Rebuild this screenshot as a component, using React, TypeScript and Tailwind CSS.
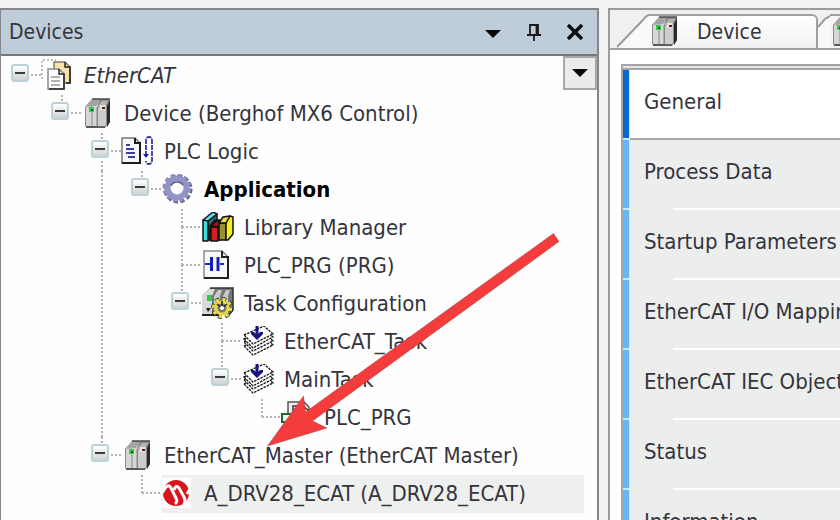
import type { ReactNode } from 'react'
import { useState } from 'react'
import clsx from 'clsx'

type TreeNode = {
    label: string
    icon: ReactNode
    labelClass?: string
    selected?: boolean
    children?: TreeNode[]
}

function DeviceIcon() {
    return (
        <svg viewBox="0 0 32 32" className="h-8 w-8 shrink-0" aria-hidden="true">
            <path d="M10 1H28V24L23 30H5L3 28V9Z" fill="#8a8a8a" />
            <path d="M4 9 10 2H17L15 9V28H4Z" fill="#d6d6d6" />
            <path d="M4 9 10 2H18L14 8Z" fill="#a4a4a4" />
            <path d="M16 10 19 7H24V27L22 29H16Z" fill="#cdcdcd" />
            <path d="M15 9 20 3H26L23 8Z" fill="#b5b5b5" />
            <path d="M25 8 28 2V24L25 29Z" fill="#2a2a2a" />
            <path d="M15 9V29M10 14V28" stroke="#888" />
            <path d="M10 1H28M4 29H23" stroke="#4a4a4a" strokeWidth="1.5" />
            <rect x="7" y="9" width="5" height="5" fill="#39c94a" />
            <rect x="9" y="11" width="2" height="2" fill="#11641d" />
            <path d="M18 7H23V12H18Z" fill="#f4e2da" />
            <rect x="20" y="9" width="3" height="2" fill="#4b2018" />
        </svg>
    )
}

function ProjectIcon() {
    return (
        <svg viewBox="0 0 32 32" className="h-8 w-8 shrink-0 overflow-visible" aria-hidden="true">
            <path d="M0 19V0H14" fill="none" stroke="#a8a8a8" strokeWidth="1.5" strokeDasharray="2 2" />
            <path d="M12 2H23L28 7V23H12Z" fill="#f6e3a9" stroke="#857b5e" strokeWidth="1.5" />
            <path d="M23 2V7H28V23H24" fill="none" stroke="#222" strokeWidth="1.5" />
            <path d="M6 9H17L22 14V29H6Z" fill="#fcfcfc" stroke="#8a8a8a" strokeWidth="1.5" />
            <path d="M17 9V14H22V29H7" fill="none" stroke="#222" strokeWidth="1.5" />
            <path d="M9 17H18M9 21H18M9 25H18" stroke="#999" strokeWidth="1.5" />
        </svg>
    )
}

function LogicIcon() {
    return (
        <svg viewBox="0 0 32 32" className="h-8 w-8 shrink-0 overflow-visible" aria-hidden="true">
            <path d="M0 2H13L18 7V27H0Z" fill="#f7f7f7" stroke="#777" strokeWidth="1.5" />
            <path d="M13 2V7H18V27H0" fill="none" stroke="#1c1c1c" strokeWidth="2" />
            <path d="M4 9H8M4 13H12M4 17H13M6 21H13" stroke="#3a3f9c" strokeWidth="2" />
            <path d="M24 20V5Q24 1 27 1Q30 1 30 5V24Q30 28 27 28Q24 28 24 25" fill="none" stroke="#34389c" strokeWidth="1.8" strokeDasharray="5 1" />
            <path d="M21 18H27L24 22Z" fill="#1a1e94" />
        </svg>
    )
}

function GearIcon() {
    return (
        <svg viewBox="0 0 32 32" className="h-8 w-8 shrink-0" aria-hidden="true">
            <circle cx="16" cy="15" r="13" fill="none" stroke="#55576f" strokeWidth="3" strokeDasharray="4 2.8" />
            <circle cx="15" cy="14" r="13" fill="none" stroke="#8b8ebd" strokeWidth="3" strokeDasharray="4 2.8" />
            <circle cx="15" cy="14" r="9.500" fill="none" stroke="#9194c4" strokeWidth="6" />
            <path d="M9 12A7 7 0 0 1 21 11" fill="none" stroke="#5f6180" strokeWidth="1.5" />
        </svg>
    )
}

function LibraryIcon() {
    return (
        <svg viewBox="0 0 32 32" className="h-8 w-8 shrink-0" aria-hidden="true">
            <g stroke="#111" strokeWidth="1.5" strokeLinejoin="round">
                <path d="M6 9 15 2V28H6Z" fill="#27707c" />
                <path d="M1 8H6V29H1Z" fill="#3fdde5" />
                <path d="M1 8 11 0 15 2 6 9Z" fill="#5fe4ec" />
                <path d="M8 14 13 8H18V28H8Z" fill="#7c1010" />
                <path d="M9 15H16V29H9Z" fill="#d51f22" />
                <path d="M9 14 14 9 19 10 16 15Z" fill="#9c1717" />
                <path d="M17 11H24V28H17Z" fill="#97922d" />
                <path d="M24 10 28 4 31 5V22L26 28H24Z" fill="#f4ef25" />
                <path d="M17 11 21 5 28 4 24 11Z" fill="#e4de3c" />
            </g>
        </svg>
    )
}

function ProgramIcon() {
    return (
        <svg viewBox="0 0 32 32" className="h-8 w-8 shrink-0" aria-hidden="true">
            <path d="M2 1H20L26 7V28H2Z" fill="#f8f8f8" stroke="#8a8a8a" strokeWidth="1.5" />
            <path d="M20 1V7H26V28H2" fill="none" stroke="#222" strokeWidth="2" />
            <path d="M3 14H9M18 14H22" stroke="#1b2ccc" strokeWidth="2" />
            <path d="M9.500 7V21M16 7V21" stroke="#141ebf" strokeWidth="3" />
        </svg>
    )
}

function TaskConfigIcon() {
    return (
        <svg viewBox="0 0 32 32" className="h-8 w-8 shrink-0 overflow-visible" aria-hidden="true">
            <path d="M8 0H31V22L26 27H1L0 8Z" fill="#777" />
            <path d="M0 8 7 1H13L10 8V27H0Z" fill="#d9d9d9" />
            <path d="M12 8 16 2H20L18 8V27H12ZM21 8 24 2H28L26 8V27H21Z" fill="#c9c9c9" />
            <path d="M8 0H31V22L27 27" fill="none" stroke="#333" strokeWidth="1.5" />
            <path d="M0 27H20" stroke="#222" strokeWidth="2" />
            <rect x="5" y="7" width="5" height="6" fill="#36c748" />
            <path d="M4 20H9L6 24Z" fill="#222" />
            <circle cx="20" cy="20" r="8.500" fill="none" stroke="#222" strokeWidth="5" strokeDasharray="3.500 3.200" />
            <circle cx="20" cy="20" r="8.500" fill="none" stroke="#ece04c" strokeWidth="3.500" strokeDasharray="3 3.700" />
            <circle cx="20" cy="20" r="6" fill="#777" stroke="#e6d842" strokeWidth="3" />
            <path d="M20 13V20M15 16 20 20 25 16" fill="none" stroke="#222" strokeWidth="1.5" />
            <circle cx="20" cy="20" r="2" fill="#fff" />
        </svg>
    )
}

function TaskIcon() {
    return (
        <svg viewBox="0 0 32 32" className="h-8 w-8 shrink-0" aria-hidden="true">
            <g fill="#fff" stroke="#1c1c1c" strokeWidth="1.4" strokeDasharray="2.500 1">
                <path d="M2 20 22 11 31 19 11 29Z" />
                <path d="M2 16 22 7 31 15 11 25Z" />
                <path d="M2 13 22 4 31 11 11 22Z" />
                <path d="M2 9 22 0 31 8 11 18Z" />
            </g>
            <path d="M15 0V9" stroke="#14167e" strokeWidth="3" />
            <path d="M9 6H12L15 9 18 6H21V8L15 14 9 8Z" fill="#14167e" />
        </svg>
    )
}

function CallIcon() {
    return (
        <svg viewBox="0 0 32 32" className="h-8 w-8 shrink-0 overflow-visible" aria-hidden="true">
            <path d="M6 17V0H22L27 5V20H6Z" fill="#eee" stroke="#555" strokeWidth="1.5" />
            <path d="M11 22V4H21L27 9V24H11Z" fill="#f7f2ef" stroke="#333" strokeWidth="1.5" />
            <rect x="0" y="12" width="9" height="8" fill="#fff" stroke="#1d6b25" strokeWidth="2" />
        </svg>
    )
}

function MicrochipIcon() {
    return (
        <svg viewBox="0 0 32 32" className="h-8 w-8 shrink-0" aria-hidden="true">
            <rect x="1" y="0" width="28" height="30" fill="#fff" />
            <circle cx="14" cy="15" r="13" fill="#d8141c" />
            <path d="M0 15 4 9Q7 6 9 10L14 20Q16 24 13 26" fill="none" stroke="#fff" strokeWidth="3" />
            <path d="M12 12Q14 6 17 10L22 19Q24 23 22 27M25 16 28 11" fill="none" stroke="#fff" strokeWidth="3" />
        </svg>
    )
}

const project: TreeNode = {
    label: 'EtherCAT',
    icon: <ProjectIcon />,
    labelClass: 'italic',
    children: [
        {
            label: 'Device (Berghof MX6 Control)',
            icon: <DeviceIcon />,
            children: [
                {
                    label: 'PLC Logic',
                    icon: <LogicIcon />,
                    children: [
                        {
                            label: 'Application',
                            icon: <GearIcon />,
                            labelClass: 'font-bold text-black',
                            children: [
                                { label: 'Library Manager', icon: <LibraryIcon /> },
                                { label: 'PLC_PRG (PRG)', icon: <ProgramIcon /> },
                                {
                                    label: 'Task Configuration',
                                    icon: <TaskConfigIcon />,
                                    children: [
                                        { label: 'EtherCAT_Task', icon: <TaskIcon /> },
                                        {
                                            label: 'MainTask',
                                            icon: <TaskIcon />,
                                            children: [{ label: 'PLC_PRG', icon: <CallIcon /> }],
                                        },
                                    ],
                                },
                            ],
                        },
                    ],
                },
                {
                    label: 'EtherCAT_Master (EtherCAT Master)',
                    icon: <DeviceIcon />,
                    children: [{ label: 'A_DRV28_ECAT (A_DRV28_ECAT)', icon: <MicrochipIcon />, selected: true }],
                },
            ],
        },
    ],
}

const pages = [
    'General',
    'Process Data',
    'Startup Parameters',
    'EtherCAT I/O Mapping',
    'EtherCAT IEC Objects',
    'Status',
    'Information',
]

function TreeItem({ node, last, root }: { node: TreeNode; last: boolean; root?: boolean }) {
    const [open, setOpen] = useState(true)

    return (
        <li role="treeitem" aria-expanded={node.children ? open : undefined} className="flex">
            <div className="flex w-10 shrink-0 flex-col">
                <div className="grid h-[38px]">
                    <svg viewBox="0 0 40 38" className="col-start-1 row-start-1 h-[38px] w-10" aria-hidden="true">
                        <g stroke="#b4b4b4" strokeWidth="2" strokeDasharray="2 2">
                            {root ? null : <path d={node.children ? 'M20 0V8' : 'M20 0V18'} />}
                            {!last && <path d={node.children ? 'M20 28V38' : 'M20 18V38'} />}
                            <path d={node.children ? 'M29 18H40' : 'M20 18H38'} />
                        </g>
                    </svg>
                    {node.children ? (
                        <button
                            type="button"
                            aria-label={`Toggle ${node.label}`}
                            onClick={() => setOpen(!open)}
                            className="col-start-1 row-start-1 mt-[7px] ml-[9px] flex h-[18px] w-[18px] items-center justify-center rounded-[3px] border-2 border-[#bcd2d6] bg-linear-to-b from-white to-[#cfd3d3]"
                        >
                            <span className="h-0.5 w-2.5 bg-[#3c3c3c]"></span>
                        </button>
                    ) : null}
                </div>
                {!last && <div className="ml-[19px] w-0.5 flex-1 bg-[repeating-linear-gradient(#b4b4b4_0_2px,transparent_2px_4px)]"></div>}
            </div>
            <div className="min-w-0 flex-1">
                <div className={clsx('mr-3 flex h-[38px] items-center gap-2.5', node.selected && 'bg-[#eeefef]')}>
                    {node.icon}
                    <span className={clsx('whitespace-nowrap', node.labelClass)}>{node.label}</span>
                </div>
                {node.children && open ? (
                    <ul role="group">
                        {node.children.map((child, index) => (
                            <TreeItem key={child.label} node={child} last={index === node.children!.length - 1} />
                        ))}
                    </ul>
                ) : null}
            </div>
        </li>
    )
}

function DevicesPanel() {
    return (
        <section className="flex min-w-0 flex-1 flex-col border-t-2 border-r-2 border-l border-[#85878a] bg-[#fefefe]">
            <header className="flex h-[46px] shrink-0 items-center border-b-2 border-[#74787e] bg-[#bfcddb] pr-0.5 pl-2">
                <h2 className="flex-1 text-[21px]">Devices</h2>
                <button type="button" aria-label="Window position" className="flex h-10 w-[41px] items-center justify-center">
                    <svg viewBox="0 0 16 16" className="h-4 w-4" aria-hidden="true"><path d="M0 6H16L8 14Z" fill="#0a0a0a" /></svg>
                </button>
                <button type="button" aria-label="Auto hide" className="flex h-10 w-[41px] items-center justify-center">
                    <svg viewBox="0 0 16 20" className="h-5 w-4" aria-hidden="true">
                        <path d="M4 13V3H12V13M1 13H15M8 13V19M10.500 3V13" fill="none" stroke="#1a1a1a" strokeWidth="1.8" />
                    </svg>
                </button>
                <button type="button" aria-label="Close" className="flex h-10 w-[41px] items-center justify-center">
                    <svg viewBox="0 0 16 16" className="h-4 w-4" aria-hidden="true"><path d="M1 1 15 15M15 1 1 15" stroke="#0a0a0a" strokeWidth="3.500" /></svg>
                </button>
            </header>
            <div className="relative min-h-0 flex-1 overflow-hidden p-px">
                <ul role="tree" aria-label="Devices">
                    <TreeItem node={project} last root />
                </ul>
                <button type="button" aria-label="Tree options" className="absolute top-0 right-0 flex h-[34px] w-[34px] items-center justify-center border-2 border-[#a8a8a8] bg-[#ebebeb]">
                    <svg viewBox="0 0 16 8" className="h-2 w-4" aria-hidden="true"><path d="M0 0H16L8 8Z" fill="#0a0a0a" /></svg>
                </button>
                <svg viewBox="0 0 294 214" className="pointer-events-none absolute top-[177px] left-[266px] h-[214px] w-[294px]" aria-hidden="true">
                    <path d="M0.500 213 36.500 163 38.500 179 286.500 0.500 292 8.500 45.500 188 60 195Z" fill="#f43c3c" stroke="#9c4b4b" strokeWidth="0.500" />
                </svg>
            </div>
        </section>
    )
}

function EditorPanel() {
    const [current, setCurrent] = useState('General')

    return (
        <section className="flex w-[232px] shrink-0 flex-col overflow-hidden border-t-2 border-l-2 border-[#9b9b9b] bg-white">
            <div role="tablist" className="flex h-10 shrink-0 items-end border-b-2 border-[#a0a0a0] bg-[#f0f0f0] pl-[7px] text-[21px]">
                <button type="button" role="tab" aria-selected="true" className="flex h-[34px] shrink-0">
                    <svg viewBox="0 0 32 34" className="h-[34px] w-8" aria-hidden="true">
                        <path d="M0 34 26 6Q30 1 32 1V34Z" fill="#f9f9f9" />
                        <path d="M0 33 26 6Q30 1 32 1" fill="none" stroke="#9b9b9b" strokeWidth="2" />
                    </svg>
                    <span className="flex h-[34px] w-[169px] items-end gap-4 rounded-tr-md border-t-2 border-r-2 border-[#a0a0a0] bg-linear-to-b from-white to-[#f1f1f1]">
                        <DeviceIcon />
                        <span className="self-center">Device</span>
                    </span>
                </button>
                <button type="button" role="tab" aria-selected="false" aria-label="EtherCAT_Master" className="flex h-[34px] shrink-0">
                    <svg viewBox="0 0 12 34" className="h-[34px] w-3" aria-hidden="true">
                        <path d="M0 13 7 5 12 2V34H0Z" fill="#f9f9f9" />
                        <path d="M0 13 7 5 12 2" fill="none" stroke="#9b9b9b" strokeWidth="2" />
                    </svg>
                    <span className="flex h-[34px] w-40 items-end border-t-2 border-[#a0a0a0] bg-[#f5f5f5]">
                        <DeviceIcon />
                    </span>
                </button>
            </div>
            <div className="flex min-h-0 flex-1 flex-col pt-3.5 pl-[11px]">
                <nav aria-label="Device pages" className="min-h-0 flex-1 overflow-hidden border-t-2 border-l-2 border-[#a5a5a8] bg-[#eceeee]">
                    <div className="h-1 border-b-2 border-[#a5a5a8] bg-[#e4e4e8]"></div>
                    {pages.map((page) => {
                        const active = page === current
                        return (
                            <button
                                key={page}
                                type="button"
                                aria-current={active ? 'page' : undefined}
                                onClick={() => setCurrent(page)}
                                className={clsx('flex h-[70px] w-full text-left', active && 'bg-white')}
                            >
                                <span className={clsx('h-full w-[7px] shrink-0 border-r border-b-2 border-[#c5eafa]', active ? 'bg-[#0868cc]' : 'bg-[#68b5f5]')}></span>
                                <span className={clsx('flex h-full min-w-0 flex-1 flex-col', active && 'border-b-2 border-[#a8a8a8]')}>
                                    <span className={clsx('flex flex-1 items-center pl-3.5 whitespace-nowrap', active ? 'pb-1' : 'pb-[5px]')}>{page}</span>
                                    {!active && <span className="ml-[43px] h-0.5 bg-white"></span>}
                                </span>
                            </button>
                        )
                    })}
                </nav>
            </div>
        </section>
    )
}

export default function App() {
    return (
        <div className="flex h-screen gap-[9px] overflow-hidden bg-[#f2f2f2] pt-2 font-['DejaVu_Sans_Condensed','DejaVu_Sans',sans-serif] text-[22px] leading-6 text-[#34343c]">
            <DevicesPanel />
            <EditorPanel />
        </div>
    )
}
